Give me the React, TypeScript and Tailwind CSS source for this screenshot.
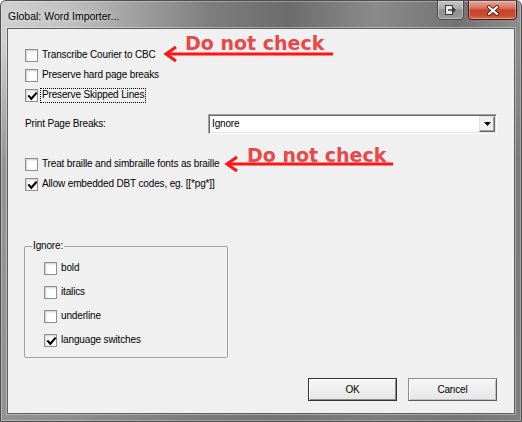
import React from 'react';

const UI = "[font-family:'Liberation_Sans',Arial,sans-serif] text-[10px] tracking-[-0.15px] text-black leading-none";

function Box({ checked }: { checked?: boolean }) {
  return (
    <span className="relative w-[13px] h-[13px] shrink-0 border border-[#8e8f8f] bg-white shadow-[inset_1px_1px_0_#d9d9d9,inset_2px_2px_0_#f0f0f0]">
      {checked && (
        <svg className="absolute left-[1px] top-[1px]" width="11" height="11" viewBox="0 0 11 11">
          <path d="M2 5.2 L4.3 7.8 L9 2.4" fill="none" stroke="#000" strokeWidth="2.1" strokeLinecap="square" />
        </svg>
      )}
    </span>
  );
}

function Check({ label, checked, focus, h = 'h-[20px]' }: { label: string; checked?: boolean; focus?: boolean; h?: string }) {
  return (
    <div className={`${h} flex items-center`}>
      <Box checked={checked} />
      <span
        className={`ml-[2px] px-[1px] h-[15px] flex items-center border ${
          focus ? 'border-dotted border-black' : 'border-transparent'
        }`}
      >
        {label}
      </span>
    </div>
  );
}

function Arrow({ className, len }: { className: string; len: number }) {
  return (
    <svg className={`absolute ${className}`} width={len + 4} height={18} viewBox={`0 0 ${len + 4} 18`}>
      <path d={`M3 9 H${len + 2}`} stroke="#ff1414" strokeWidth="3" />
      <path d="M13 2 L3 9 L13 16" fill="none" stroke="#ff1414" strokeWidth="3" />
    </svg>
  );
}

const NOTE = "absolute [font-family:'DejaVu_Sans',Verdana,sans-serif] font-bold text-[19px] tracking-normal leading-none text-[#e84848] whitespace-nowrap";

export default function App() {
  return (
    <div
      className={`${UI} relative w-[522px] h-[422px] flex flex-col rounded-t-[6px] overflow-hidden border border-[#4e4e4e] bg-[linear-gradient(180deg,rgba(110,110,110,0)_0px,rgba(110,110,110,0)_40px,rgba(110,110,110,0.6)_160px,rgba(120,120,120,0.7)_100%),linear-gradient(90deg,#d0d0d0_0%,#c2c2c2_12%,#a4a4a4_24%,#7e7e7e_40%,#6c6c6c_55%,#8a8a8a_72%,#737373_88%,#8e8e8e_100%)] shadow-[inset_0_0_0_1px_rgba(255,255,255,0.3)]`}
    >
      {/* title bar */}
      <div className="h-[27px] flex items-start shrink-0">
        <div className="h-full flex items-center pl-[7px] pt-[4px] text-[10.5px] tracking-normal [text-shadow:0_0_6px_rgba(255,255,255,0.9)]">
          Global: Word Importer...
        </div>
        <div className="ml-auto flex items-start -mt-[1px] mr-[4px]">
          <div className="w-[27px] h-[20px] mr-[4px] flex items-center justify-center rounded-b-[4px] border border-[#4a4a4a] bg-[linear-gradient(#c4c4c4,#a9a9a9_45%,#8e8e8e_50%,#9a9a9a)] shadow-[inset_0_0_0_1px_rgba(255,255,255,0.35)]">
            <svg width="13" height="10" viewBox="0 0 13 10">
              <rect x="1.5" y="0.5" width="7" height="9" fill="#e8e8e8" stroke="#3a3a3a" />
              <path d="M4 5 H11 M9 3 L11 5 L9 7" fill="none" stroke="#3a3a3a" strokeWidth="1.3" />
            </svg>
          </div>
          <div className="w-[49px] h-[20px] flex items-center justify-center rounded-b-[4px] border border-[#4c1a12] bg-[linear-gradient(#e8a898,#d6705c_40%,#c4442c_50%,#cc4a30_80%,#e07050)] shadow-[inset_0_0_0_1px_rgba(255,255,255,0.3)]">
            <svg width="14" height="11" viewBox="0 0 14 11">
              <path d="M3 2 L11 9 M11 2 L3 9" stroke="#5a1f14" strokeWidth="4" strokeLinecap="round" />
              <path d="M3 2 L11 9 M11 2 L3 9" stroke="#fff" strokeWidth="2.2" strokeLinecap="round" />
            </svg>
          </div>
        </div>
      </div>

      {/* client area */}
      <div className="relative flex-1 mx-[6px] mb-[7px] flex flex-col bg-[#f0f0f0] border border-[#5e5e5e] shadow-[0_0_0_1px_rgba(255,255,255,0.35)] pl-[17px] pr-[17px] pt-[16px] pb-[12px]">
        <Check label="Transcribe Courier to CBC" />
        <Check label="Preserve hard page breaks" />
        <Check label="Preserve Skipped Lines" checked focus />

        <div className="mt-[9px] h-[20px] flex items-center">
          <span className="w-[183px]">Print Page Breaks:</span>
          <div className="w-[289px] h-[20px] flex items-center bg-white border border-t-[#a0a0a0] border-l-[#a0a0a0] border-r-[#ffffff] border-b-[#ffffff] shadow-[inset_1px_1px_0_#696969,inset_-1px_-1px_0_#e3e3e3]">
            <span className="flex-1 pl-[3px]">Ignore</span>
            <div className="w-[16px] h-[16px] mr-[1px] flex items-center justify-center bg-[#f0f0f0] border border-t-[#e3e3e3] border-l-[#e3e3e3] border-r-[#696969] border-b-[#696969] shadow-[inset_-1px_-1px_0_#a0a0a0]">
              <svg width="7" height="4" viewBox="0 0 7 4">
                <path d="M0 0 H7 L3.5 4 Z" fill="#000" />
              </svg>
            </div>
          </div>
        </div>

        <div className="mt-[20px]">
          <Check label="Treat braille and simbraille fonts as braille" />
          <Check label="Allow embedded DBT codes, eg. [[*pg*]]" checked />
        </div>

        {/* Ignore group */}
        <div className="relative mt-[52px] -ml-[1px] w-[204px] h-[112px] border border-[#a0a0a0] rounded-[2px] pl-[19px] pt-[9px]">
          <span className="absolute left-[7px] -top-[6px] px-[1px] bg-[#f0f0f0]">Ignore:</span>
          <Check label="bold" h="h-[24px]" />
          <Check label="italics" h="h-[24px]" />
          <Check label="underline" h="h-[24px]" />
          <Check label="language switches" checked h="h-[24px]" />
        </div>

        <div className="mt-auto flex justify-end gap-[11px]">
          <button className="w-[89px] h-[23px] border border-[#333333] bg-[linear-gradient(#f6f6f6,#e6e6e6)] shadow-[inset_1px_1px_0_#ffffff,inset_-1px_-1px_0_#8a8a8a]">
            OK
          </button>
          <button className="w-[89px] h-[23px] border border-[#8c8c8c] border-r-[#5a5a5a] border-b-[#5a5a5a] bg-[linear-gradient(#f6f6f6,#e6e6e6)] shadow-[inset_1px_1px_0_#ffffff,inset_-1px_-1px_0_#c0c0c0]">
            Cancel
          </button>
        </div>

        {/* annotations */}
        <span className={`${NOTE} left-[177px] top-[5px]`}>Do not check</span>
        <Arrow className="left-[155px] top-[16px]" len={168} />
        <span className={`${NOTE} left-[239px] top-[117px]`}>Do not check</span>
        <Arrow className="left-[216px] top-[126px]" len={167} />
      </div>
    </div>
  );
}
